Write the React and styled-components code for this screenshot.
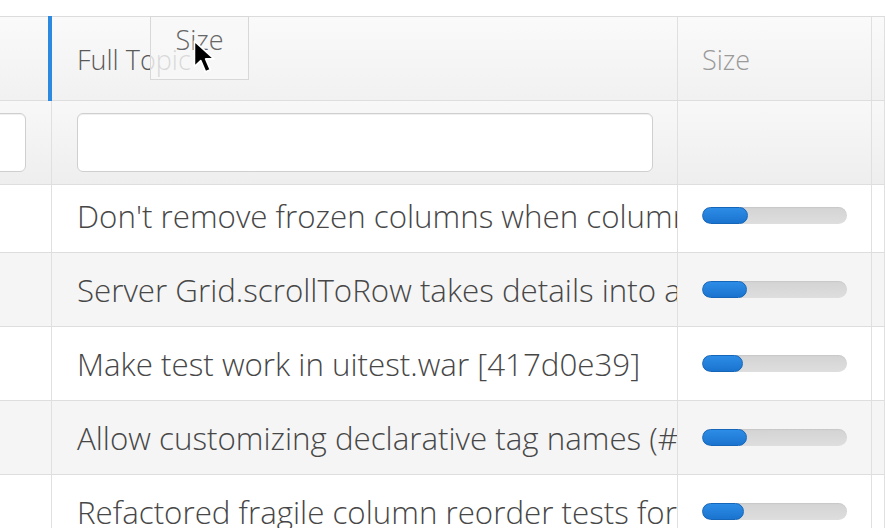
import React from 'react';
import styled, { createGlobalStyle } from 'styled-components';

const Global = createGlobalStyle`
  html, body { margin: 0; padding: 0; background: #fff; }
  body { font-family: "Open Sans", "Liberation Sans", sans-serif; font-weight: 300; }
`;

const Page = styled.div`
  height: 528px;
  overflow: hidden;
  padding-top: 16px;
  box-sizing: border-box;
`;

const Grid = styled.div`
  border-top: 1px solid #dcdcdc;
`;

const Row = styled.div`
  display: grid;
  grid-template-columns: 52px 626px 194px 1fr;
  height: ${({ h }) => h}px;
  box-sizing: border-box;
  border-bottom: 1px solid #dedede;
  background: ${({ bg }) => bg};
`;

const Cell = styled.div`
  position: relative;
  border-right: 1px solid #e0e0e0;
  display: flex;
  align-items: center;
  padding-left: ${({ pad }) => pad || 0}px;
  min-width: 0;
  overflow: ${({ clip }) => (clip ? 'hidden' : 'visible')};
  white-space: nowrap;
`;

const HeadText = styled.span`
  font-size: 27px;
  color: ${({ muted }) => (muted ? '#9a9a9a' : '#5a5a5a')};
  margin-top: 2px;
`;

const DropMarker = styled.div`
  position: absolute;
  left: -4px;
  top: -1px;
  bottom: -1px;
  width: 4px;
  background: #2b89e0;
`;

const Ghost = styled.div`
  position: absolute;
  left: 98px;
  top: -1px;
  width: 99px;
  height: 64px;
  box-sizing: border-box;
  border: 1px solid #d8d8d8;
  background: rgba(247, 247, 247, 0.8);
  display: flex;
  justify-content: center;
  padding-top: 4px;
  font-size: 27px;
  color: #666;
  z-index: 2;
`;

const Cursor = styled.svg`
  position: absolute;
  left: 41px;
  top: 22px;
`;

const FilterInput = styled.div`
  height: 59px;
  box-sizing: border-box;
  border: 1px solid #cfcfcf;
  border-radius: 6px;
  background: #fff;
  box-shadow: inset 0 1px 0 #f0f0f0;
  margin-left: ${({ ml }) => ml}px;
  width: ${({ w }) => w}px;
  flex: none;
`;

const Body = styled.div`
  overflow: hidden;
`;

const Rows = styled.div`
  margin-top: -6px;
`;

const CellText = styled.span`
  font-size: 31.3px;
  color: #474747;
`;

const Track = styled.div`
  width: 145px;
  height: 17px;
  border-radius: 9px;
  background: linear-gradient(#d3d3d3, #dedede);
  box-shadow: inset 0 1px 1px rgba(0, 0, 0, 0.05);
  overflow: hidden;
`;

const Fill = styled.div`
  height: 100%;
  border-radius: 9px;
  box-sizing: border-box;
  border: 1px solid #1566b8;
  background: linear-gradient(#2d8ce6, #1a74cf);
`;

const headBg = 'linear-gradient(#fafafa, #f1f1f1)';
const filterBg = 'linear-gradient(#f8f8f8, #eeeeee)';

const data = [
  ["Don't remove frozen columns when columns are reordered", 46],
  ['Server Grid.scrollToRow takes details into account', 45],
  ['Make test work in uitest.war [417d0e39]', 41],
  ['Allow customizing declarative tag names (#19174)', 45],
  ['Refactored fragile column reorder tests for Grid', 42],
];

export default function App() {
  return (
    <Page>
      <Global />
      <Grid>
        <Row h={84} bg={headBg}>
          <Cell />
          <Cell pad={25}>
            <DropMarker />
            <HeadText>Full Topic</HeadText>
            <Ghost>
              Size
              <Cursor width="26" height="36" viewBox="0 0 24 34">
                <path
                  d="M2 2 L2 26 L8 20.5 L12.5 31 L17 29 L12.6 18.8 L20.5 18.8 Z"
                  fill="#000"
                  stroke="#fff"
                  strokeWidth="1.6"
                  strokeLinejoin="round"
                />
              </Cursor>
            </Ghost>
          </Cell>
          <Cell pad={24}>
            <HeadText muted>Size</HeadText>
          </Cell>
          <Cell />
        </Row>
        <Row h={84} bg={filterBg}>
          <Cell clip>
            <FilterInput ml={-40} w={66} />
          </Cell>
          <Cell pad={25}>
            <FilterInput ml={0} w={576} />
          </Cell>
          <Cell />
          <Cell />
        </Row>
        <Body>
          <Rows>
            {data.map(([text, pct], i) => (
              <Row key={i} h={74} bg={i % 2 ? '#f5f5f5' : '#fff'}>
                <Cell />
                <Cell pad={25} clip>
                  <CellText>{text}</CellText>
                </Cell>
                <Cell pad={24}>
                  <Track>
                    <Fill style={{ width: pct }} />
                  </Track>
                </Cell>
                <Cell />
              </Row>
            ))}
          </Rows>
        </Body>
      </Grid>
    </Page>
  );
}
